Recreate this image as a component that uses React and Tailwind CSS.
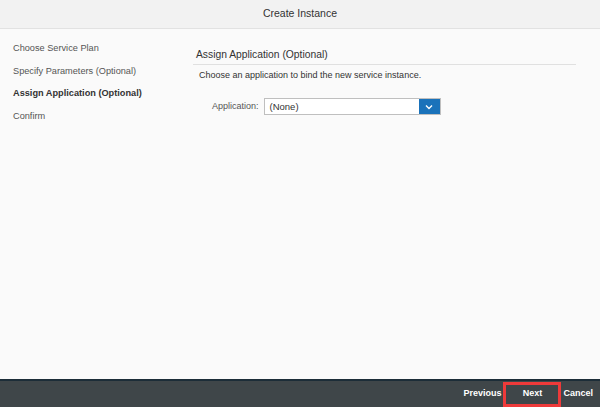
import React from "react";

const steps = [
  { label: "Choose Service Plan" },
  { label: "Specify Parameters (Optional)" },
  { label: "Assign Application (Optional)", active: true },
  { label: "Confirm" },
];

const App = () => {
  return (
    <div
      className="w-[600px] h-[407px] flex flex-col bg-[#fafafa] overflow-hidden"
      style={{ fontFamily: '"Liberation Sans", Arial, sans-serif' }}
    >
      <div className="h-[29px] shrink-0 bg-[#f2f2f2] border-b border-[#e2e2e2] flex items-center justify-center">
        <span className="text-[10.5px] text-[#333]">Create Instance</span>
      </div>

      <div className="flex-1 flex">
        <div className="w-[180px] shrink-0 pl-[13px] pt-[13px] flex flex-col gap-[9px]">
          {steps.map((s) => (
            <div
              key={s.label}
              className={`text-[9.2px] leading-[13.5px] ${s.active ? "font-bold text-[#333]" : "text-[#555]"}`}
            >
              {s.label}
            </div>
          ))}
        </div>

        <div className="flex-1 pt-[17px] pr-[24px] pl-[13px]">
          <div className="border-b border-[#e0e0e0] pl-[3px] pb-[2px] leading-[14px]">
            <span className="text-[10.3px] text-[#333]">Assign Application (Optional)</span>
          </div>
          <div className="pl-[6px] pt-[4px] text-[9px] leading-[12px] text-[#333]">
            Choose an application to bind the new service instance.
          </div>
          <div className="flex items-center mt-[17px] pl-[19px]">
            <span className="text-[9px] text-[#555] mr-[5px]">Application:</span>
            <div className="w-[177px] h-[17px] flex border border-[#bfbfbf] bg-white">
              <span className="flex-1 text-[9.5px] text-[#333] pl-[5px] leading-[15px]">(None)</span>
              <div className="w-[21px] bg-[#1a72ba] flex items-center justify-center">
                <svg width="8" height="6" viewBox="0 0 8 6">
                  <path d="M1 1.5 L4 4.5 L7 1.5" fill="none" stroke="white" strokeWidth="1.4" />
                </svg>
              </div>
            </div>
          </div>
        </div>
      </div>

      <div className="h-[28px] shrink-0 bg-[#3f4649] border-t-2 border-[#1c2d38] flex items-center justify-end">
        <span className="text-[9px] font-bold text-white mr-[2px]">Previous</span>
        <div className="w-[58px] h-[25px] border-[3px] border-[#ee3a3a] flex items-center justify-center">
          <span className="text-[9px] font-bold text-white">Next</span>
        </div>
        <span className="text-[9px] font-bold text-white ml-[2px] mr-[7px]">Cancel</span>
      </div>
    </div>
  );
};

export default App;
